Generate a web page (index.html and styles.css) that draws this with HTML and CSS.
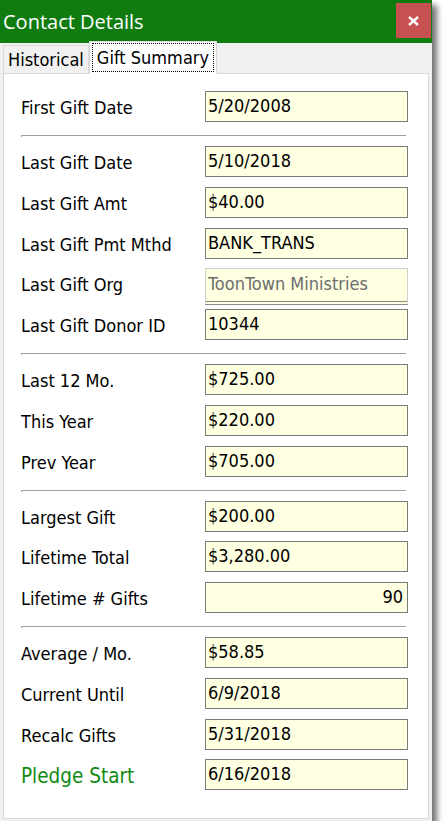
FILE: index.html
```html
<!DOCTYPE html>
<html lang="en">
<head>
    <meta charset="UTF-8">
    <meta name="viewport" content="width=device-width, initial-scale=1.0">
    <title>Contact Details</title>
    <link rel="stylesheet" href="styles.css">
</head>
<body>
    <div class="window">
        <div class="title-bar">
            <span class="title">Contact Details</span>
            <span class="close">
                <svg width="11" height="10" viewBox="0 0 11 10"><path d="M1 1 L10 9 M10 1 L1 9" stroke="#fff" stroke-width="2.4"/></svg>
            </span>
        </div>
        <div class="tab-header">
            <span class="tab-items">Historical</span>
            <span class="tab-items active"><span class="focus">Gift Summary</span></span>
        </div>
        <div class="tab-panel">
            <div class="row"><span class="label">First Gift Date</span><span class="field">5/20/2008</span></div>
            <div class="sep"></div>
            <div class="row"><span class="label">Last Gift Date</span><span class="field">5/10/2018</span></div>
            <div class="row"><span class="label">Last Gift Amt</span><span class="field">$40.00</span></div>
            <div class="row"><span class="label">Last Gift Pmt Mthd</span><span class="field">BANK_TRANS</span></div>
            <div class="row"><span class="label">Last Gift Org</span><span class="field disabled">ToonTown Ministries</span></div>
            <div class="row"><span class="label">Last Gift Donor ID</span><span class="field">10344</span></div>
            <div class="sep"></div>
            <div class="row"><span class="label">Last 12 Mo.</span><span class="field">$725.00</span></div>
            <div class="row"><span class="label">This Year</span><span class="field">$220.00</span></div>
            <div class="row"><span class="label">Prev Year</span><span class="field">$705.00</span></div>
            <div class="sep"></div>
            <div class="row"><span class="label">Largest Gift</span><span class="field">$200.00</span></div>
            <div class="row"><span class="label">Lifetime Total</span><span class="field">$3,280.00</span></div>
            <div class="row"><span class="label">Lifetime # Gifts</span><span class="field num">90</span></div>
            <div class="sep"></div>
            <div class="row"><span class="label">Average / Mo.</span><span class="field">$58.85</span></div>
            <div class="row"><span class="label">Current Until</span><span class="field">6/9/2018</span></div>
            <div class="row"><span class="label">Recalc Gifts</span><span class="field">5/31/2018</span></div>
            <div class="row"><span class="label green">Pledge Start</span><span class="field">6/16/2018</span></div>
        </div>
    </div>
</body>
</html>
```

FILE: styles.css
```css
body {
    margin: 0;
    background: #fff;
    font-family: "DejaVu Sans Condensed", "DejaVu Sans", sans-serif;
    font-stretch: condensed;
    color: #000;
}
.window {
    width: 432px;
    height: 821px;
    background: #f0f0f0;
    box-shadow: 5px 5px 6px rgba(0, 0, 0, 0.55);
    display: flex;
    flex-direction: column;
}
.title-bar {
    height: 43px;
    background: #107c10;
    display: flex;
    justify-content: space-between;
    align-items: flex-start;
}
.title {
    color: #fff;
    font-family: "Open Sans", "Noto Sans", sans-serif;
    font-stretch: normal;
    font-size: 20px;
    line-height: 43px;
    padding-left: 3px;
}
.close {
    width: 35px;
    height: 35px;
    margin-top: 3px;
    margin-right: 1px;
    background: #c75050;
    display: flex;
    align-items: center;
    justify-content: center;
}
.tab-header {
    height: 30px;
    display: flex;
    align-items: flex-end;
    padding-left: 3px;
    font-size: 18px;
    position: relative;
    z-index: 1;
}
.tab-items {
    height: 27px;
    padding: 0 4px 0 4px;
    border: 1px solid #d9d9d9;
    border-bottom: none;
    line-height: 28px;
    background: #f0f0f0;
}
.tab-items.active {
    height: 31px;
    padding: 1px 2px 0;
    margin-bottom: -1px;
    background: #fff;
    border-color: #d9d9d9;
}
.tab-items.active .focus {
    display: block;
    height: 27px;
    line-height: 27px;
    padding: 0 4px 0 4px;
    border: 1px dotted #000;
}
.tab-panel {
    flex: 1;
    margin: 0 3px 2px 3px;
    background: #fff;
    border: 1px solid #d9d9d9;
    padding: 17px 0 0 17px;
}
.row {
    height: 40.75px;
    display: flex;
    align-items: flex-start;
}
.label {
    width: 184px;
    height: 31px;
    line-height: 33px;
    font-size: 18px;
}
.label.green {
    color: #138a13;
    font-size: 20.5px;
    line-height: 35px;
}
.field {
    box-sizing: border-box;
    width: 203px;
    height: 31px;
    border: 1px solid #7a7a7a;
    background: #ffffe1;
    font-size: 18px;
    line-height: 27px;
    padding: 0 2px;
}
.field.num {
    text-align: right;
    padding-right: 4px;
}
.field.disabled {
    height: 37px;
    color: #6d6d6d;
    border: 1px solid #cfcfcf;
    border-bottom: 4px double #8a8a8a;
    line-height: 29px;
}
.sep {
    width: 385px;
    height: 2px;
    box-sizing: border-box;
    margin: 3.25px 0 9px 0;
    border-top: 1px solid #a0a0a0;
    border-left: 1px solid #a0a0a0;
}
```
